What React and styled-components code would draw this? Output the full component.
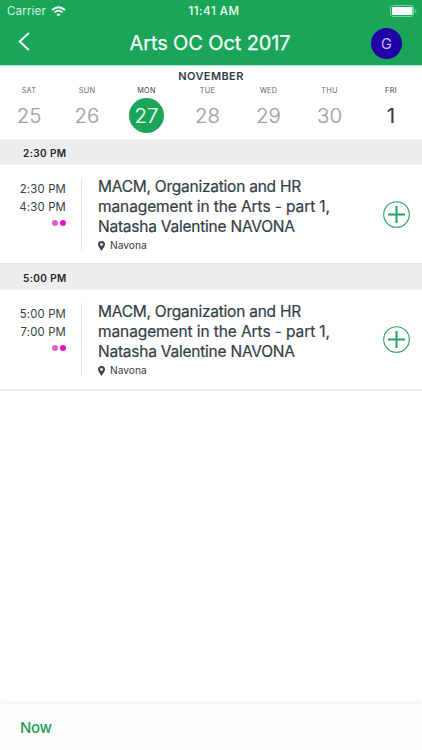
import React from 'react';
import styled, { createGlobalStyle } from 'styled-components';

const Global = createGlobalStyle`
  * { box-sizing: border-box; }
  body { margin: 0; background: #fff; }
`;

const Screen = styled.div`
  width: 422px;
  height: 750px;
  display: flex;
  flex-direction: column;
  overflow: hidden;
  background: #fff;
  color: #333d45;
  font-family: Inter, 'Liberation Sans', sans-serif;
  white-space: nowrap;
`;

const Header = styled.header`
  height: 65px;
  flex: none;
  background: #1aa559;
  color: #f2fff8;
`;

const StatusBar = styled.div`
  height: 22px;
  padding: 0 5px 0 7px;
  display: grid;
  grid-template-columns: 1fr auto 1fr;
  align-items: center;
  font-size: 11.5px;
  line-height: 22px;
`;

const Carrier = styled.div`
  display: flex;
  align-items: center;
  gap: 5px;
  letter-spacing: 0.17px;
  color: #d5f5e3;
`;

const Clock = styled.div`
  padding-left: 4px;
  font-weight: 500;
  letter-spacing: 0.55px;
`;

const Battery = styled.div`
  display: flex;
  justify-content: flex-end;
`;

const NavBar = styled.div`
  height: 43px;
  padding: 0 20px 0 18px;
  display: grid;
  grid-template-columns: 31px 1fr 31px;
  align-items: center;
`;

const BackButton = styled.button`
  display: flex;
  margin-top: -4px;
  padding: 0;
  border: 0;
  background: none;
  color: inherit;
`;

const Title = styled.h1`
  margin: 0;
  font-size: 20px;
  font-weight: 400;
  line-height: 43px;
  text-align: center;
  letter-spacing: -0.12px;
  color: #f6fffa;
  -webkit-text-stroke: 0.25px currentColor;
`;

const Avatar = styled.div`
  width: 31px;
  height: 31px;
  border-radius: 50%;
  background: #2200a8;
  color: #c9bdf5;
  font-size: 14.5px;
  line-height: 31px;
  text-align: center;
`;

const Calendar = styled.section`
  height: 74px;
  flex: none;
  border-top: 1px solid #a4f5c8;
`;

const Month = styled.div`
  height: 19px;
  font-size: 11px;
  font-weight: 600;
  line-height: 20px;
  letter-spacing: 0.4px;
  text-align: center;
`;

const Week = styled.div`
  display: grid;
  grid-template-columns: 58px 58px 61px 61px 61px 61px 62px;
`;

const Day = styled.div`
  display: flex;
  flex-direction: column;
  align-items: center;
`;

const Weekday = styled.div`
  height: 13px;
  font-size: 7.3px;
  line-height: 11px;
  letter-spacing: 0.3px;
  color: ${(p) => (p.$strong ? '#3d444a' : '#62676b')};
`;

const DateNumber = styled.div`
  width: 35px;
  height: 35px;
  border-radius: 50%;
  background: ${(p) => (p.$state === 'selected' ? '#1aa559' : 'transparent')};
  color: ${(p) => ({ selected: '#f0fff6', active: '#333c44' })[p.$state] || '#a0a2a5'};
  font-size: 20.5px;
  font-weight: ${(p) => (p.$state === 'active' ? 400 : 300)};
  line-height: 36px;
  text-align: center;
  -webkit-text-stroke: 0.15px currentColor;
`;

const TimeHeading = styled.h2`
  height: 26px;
  flex: none;
  margin: 0;
  padding-left: 23px;
  background: #eeeeee;
  color: #20262b;
  font-size: 10px;
  font-weight: 600;
  line-height: 28px;
  letter-spacing: 0.4px;
`;

const Session = styled.article`
  height: ${(p) => (p.$last ? 101 : 99)}px;
  flex: none;
  padding: 12px 12px 0 0;
  display: grid;
  grid-template-columns: 82px 1fr 27px;
  border-bottom: ${(p) => (p.$last ? '2px solid #eeeeee' : '1px solid #e3e3e3')};
`;

const Times = styled.div`
  height: 73px;
  margin-top: 1px;
  padding: 2px 15px 0 0;
  border-right: 1px solid #e7e7e7;
  text-align: right;
  font-size: 11.3px;
  line-height: 18px;
  letter-spacing: 0.2px;
`;

const Dots = styled.div`
  height: 13px;
  display: flex;
  justify-content: flex-end;
  align-items: center;
  gap: 2px;
`;

const Dot = styled.span`
  width: 6px;
  height: 6px;
  border-radius: 50%;
  background: ${(p) => p.$color};
`;

const Details = styled.div`
  padding: 0 0 0 16px;
`;

const SessionTitle = styled.h3`
  margin: 0;
  font-size: 15.5px;
  font-weight: 400;
  line-height: 20px;
  -webkit-text-stroke: 0.2px currentColor;
`;

const TitleLine = styled.span`
  display: block;
  letter-spacing: ${(p) => p.$tracking}px;
`;

const Location = styled.div`
  display: flex;
  align-items: center;
  gap: 5px;
  font-size: 10.2px;
  line-height: 17px;
`;

const AddButton = styled.button`
  height: 27px;
  margin-top: 24px;
  padding: 0;
  border: 0;
  background: none;
  display: flex;
`;

const Footer = styled.footer`
  height: 46px;
  flex: none;
  margin-top: auto;
  padding-left: 20px;
  background: #fdfdfd;
  box-shadow: 0 -1px 6px rgba(0, 0, 0, 0.09);
  color: #259d59;
  font-size: 15px;
  font-weight: 500;
  line-height: 47px;
  letter-spacing: -0.3px;
`;

const WifiIcon = () => (
  <svg width="15" height="11" viewBox="0 0 15 11" fill="none" stroke="#f0fff6">
    <path d="M1.1 4Q7.5 -1.6 13.9 4" strokeWidth="1.9" />
    <path d="M3.4 6.4Q7.5 2.9 11.6 6.4" strokeWidth="1.7" />
    <path d="M7.5 10.6 5.3 8.3Q7.5 6.5 9.7 8.3Z" fill="#f0fff6" stroke="none" />
  </svg>
);

const BatteryIcon = () => (
  <svg width="27" height="12" viewBox="0 0 27 12">
    <rect x="0.5" y="0.5" width="23" height="11" rx="2.5" fill="none" stroke="#72d69c" />
    <rect x="2" y="2" width="20.5" height="8" rx="1" fill="#fff" />
    <path d="M25 4Q26.5 4.5 26.5 6T25 8Z" fill="#72d69c" />
  </svg>
);

const BackIcon = () => (
  <svg width="12" height="19" viewBox="0 0 12 19" fill="none" stroke="currentColor" strokeWidth="2">
    <path d="M10.8 1 1.7 9.5l9.1 8.5" />
  </svg>
);

const PinIcon = () => (
  <svg width="7" height="10" viewBox="0 0 7 10">
    <path
      fillRule="evenodd"
      fill="#3b4248"
      d="M3.5 0A3.5 3.5 0 0 1 7 3.5C7 5.5 4.5 8 3.5 10 2.5 8 0 5.5 0 3.5A3.5 3.5 0 0 1 3.5 0ZM3.5 2.1A1.4 1.4 0 1 0 3.5 4.9 1.4 1.4 0 0 0 3.5 2.1Z"
    />
  </svg>
);

const PlusIcon = () => (
  <svg width="27" height="27" viewBox="0 0 27 27" fill="none" stroke="#22a35c">
    <circle cx="13.5" cy="13.5" r="12.8" strokeWidth="1.1" />
    <path d="M5 13.5h17M13.5 5v17" strokeWidth="2" />
  </svg>
);

const days = [
  { name: 'SAT', date: 25 },
  { name: 'SUN', date: 26 },
  { name: 'MON', date: 27, state: 'selected' },
  { name: 'TUE', date: 28 },
  { name: 'WED', date: 29 },
  { name: 'THU', date: 30 },
  { name: 'FRI', date: 1, state: 'active' },
];

const sessions = [
  { start: '2:30 PM', end: '4:30 PM' },
  { start: '5:00 PM', end: '7:00 PM' },
];

export default function App() {
  return (
    <Screen>
      <Global />
      <Header>
        <StatusBar>
          <Carrier>Carrier <WifiIcon /></Carrier>
          <Clock>11:41 AM</Clock>
          <Battery><BatteryIcon /></Battery>
        </StatusBar>
        <NavBar>
          <BackButton aria-label="Back"><BackIcon /></BackButton>
          <Title>Arts OC Oct 2017</Title>
          <Avatar>G</Avatar>
        </NavBar>
      </Header>
      <Calendar>
        <Month>NOVEMBER</Month>
        <Week>
          {days.map((d) => (
            <Day key={d.name}>
              <Weekday $strong={Boolean(d.state)}>{d.name}</Weekday>
              <DateNumber $state={d.state}>{d.date}</DateNumber>
            </Day>
          ))}
        </Week>
      </Calendar>
      {sessions.map((s, i) => (
        <React.Fragment key={s.start}>
          <TimeHeading>{s.start}</TimeHeading>
          <Session $last={i === sessions.length - 1}>
            <Times>
              <div>{s.start}</div>
              <div>{s.end}</div>
              <Dots>
                <Dot $color="#dc5fd0" />
                <Dot $color="#ee08cb" />
              </Dots>
            </Times>
            <Details>
              <SessionTitle>
                <TitleLine $tracking={-0.24}>MACM, Organization and HR</TitleLine>
                <TitleLine $tracking={-0.1}>management in the Arts - part 1,</TitleLine>
                <TitleLine $tracking={-0.23}>Natasha Valentine NAVONA</TitleLine>
              </SessionTitle>
              <Location><PinIcon />Navona</Location>
            </Details>
            <AddButton aria-label="Add session"><PlusIcon /></AddButton>
          </Session>
        </React.Fragment>
      ))}
      <Footer>Now</Footer>
    </Screen>
  );
}
